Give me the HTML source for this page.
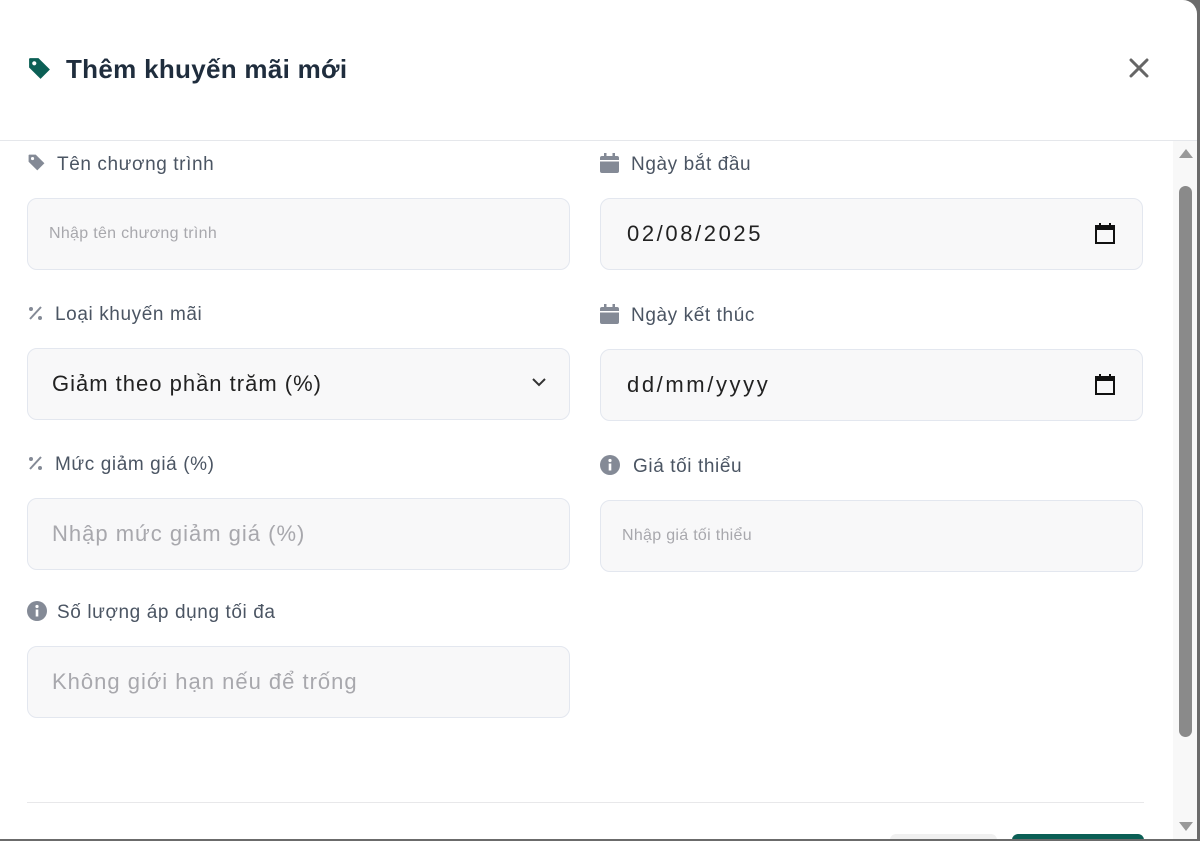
<!DOCTYPE html>
<html><head><meta charset="utf-8"><style>
*{box-sizing:border-box;margin:0;padding:0}
body{width:1200px;height:841px;background:#6b6b6b;font-family:"Liberation Sans",sans-serif;overflow:hidden;position:relative}
.modal{position:absolute;left:0;top:0;width:1197px;height:839px;background:#fff;border-top-right-radius:14px;overflow:hidden}
.hdr{position:absolute;left:0;top:0;width:1197px;height:141px;border-bottom:1px solid #e5e7eb}
.title{position:absolute;left:66px;top:54px;font-size:26px;font-weight:bold;color:#1f2d3d;letter-spacing:0.3px}
.lbl{position:absolute;font-size:19px;color:#4b5563;letter-spacing:0.6px;margin-top:2px}
.inp{position:absolute;width:543px;height:72px;background:#f8f8f9;border:1px solid #e3e7ef;border-radius:10px;font-size:22px;color:#222;padding-left:24px;display:flex;align-items:center;letter-spacing:1px}
.ph{color:#a8a8ad}
.sm{font-size:16px;letter-spacing:0.3px}
.dt{letter-spacing:2.6px}
svg{position:absolute}
</style></head><body>
<div class="modal">
<div class="hdr">
<svg style="left:27px;top:56px" width="25" height="25" viewBox="0 0 24 24"><path d="M2 3a1 1 0 0 1 1-1h8l11 11-9 9L2 11z" fill="#0b5f55"/><circle cx="7" cy="7" r="2" fill="#fff"/></svg>
<div class="title">Thêm khuyến mãi mới</div>
<svg style="left:1128px;top:57px" width="22" height="22" viewBox="0 0 22 22"><path d="M3 3l16 16M19 3L3 19" stroke="#666" stroke-width="3" stroke-linecap="round"/></svg>
</div>
<svg style="left:27px;top:153px" width="19" height="19" viewBox="0 0 24 24"><path d="M2 3a1 1 0 0 1 1-1h8l11 11-9 9L2 11z" fill="#848a96"/><circle cx="7" cy="7" r="2" fill="#fff"/></svg>
<div class="lbl" style="left:57px;top:152px">Tên chương trình</div>
<div class="inp" style="left:27px;top:198px;padding-left:21px"><span class="ph sm">Nhập tên chương trình</span></div>
<svg style="left:27px;top:305px" width="17" height="17" viewBox="0 0 17 17"><path d="M14 2L3 14" stroke="#848a96" stroke-width="2"/><circle cx="4" cy="4" r="2" fill="#848a96"/><circle cx="13" cy="13" r="2" fill="#848a96"/></svg>
<div class="lbl" style="left:55px;top:302px">Loại khuyến mãi</div>
<div class="inp" style="left:27px;top:348px">Giảm theo phần trăm (%)<svg style="left:504px;top:28px" width="14" height="10" viewBox="0 0 14 10"><path d="M1 2l6 6 6-6" stroke="#333" stroke-width="2" fill="none"/></svg></div>
<svg style="left:27px;top:455px" width="17" height="17" viewBox="0 0 17 17"><path d="M14 2L3 14" stroke="#848a96" stroke-width="2"/><circle cx="4" cy="4" r="2" fill="#848a96"/><circle cx="13" cy="13" r="2" fill="#848a96"/></svg>
<div class="lbl" style="left:55px;top:452px">Mức giảm giá (%)</div>
<div class="inp" style="left:27px;top:498px"><span class="ph">Nhập mức giảm giá (%)</span></div>
<svg style="left:27px;top:601px" width="20" height="20" viewBox="0 0 20 20"><circle cx="10" cy="10" r="10" fill="#848a96"/><rect x="8.7" y="8.5" width="2.6" height="7" fill="#fff"/><circle cx="10" cy="5.5" r="1.6" fill="#fff"/></svg>
<div class="lbl" style="left:57px;top:600px">Số lượng áp dụng tối đa</div>
<div class="inp" style="left:27px;top:646px"><span class="ph">Không giới hạn nếu để trống</span></div>

<svg style="left:600px;top:153px" width="19" height="20" viewBox="0 0 19 20"><rect x="0" y="3" width="19" height="17" rx="2" fill="#848a96"/><rect x="4" y="0" width="2.5" height="5" fill="#848a96"/><rect x="12.5" y="0" width="2.5" height="5" fill="#848a96"/><rect x="0" y="7" width="19" height="1.5" fill="#fff"/></svg>
<div class="lbl" style="left:631px;top:152px">Ngày bắt đầu</div>
<div class="inp dt" style="left:600px;top:198px;padding-left:26px">02/08/2025<svg style="left:494px;top:24px" width="20" height="21" viewBox="0 0 20 21"><rect x="1" y="3" width="18" height="17" fill="none" stroke="#111" stroke-width="2"/><rect x="1" y="3" width="18" height="4" fill="#111"/><rect x="4" y="0" width="2" height="4" fill="#111"/><rect x="14" y="0" width="2" height="4" fill="#111"/></svg></div>
<svg style="left:600px;top:304px" width="19" height="20" viewBox="0 0 19 20"><rect x="0" y="3" width="19" height="17" rx="2" fill="#848a96"/><rect x="4" y="0" width="2.5" height="5" fill="#848a96"/><rect x="12.5" y="0" width="2.5" height="5" fill="#848a96"/><rect x="0" y="7" width="19" height="1.5" fill="#fff"/></svg>
<div class="lbl" style="left:631px;top:303px">Ngày kết thúc</div>
<div class="inp dt" style="left:600px;top:349px;padding-left:26px">dd/mm/yyyy<svg style="left:494px;top:24px" width="20" height="21" viewBox="0 0 20 21"><rect x="1" y="3" width="18" height="17" fill="none" stroke="#111" stroke-width="2"/><rect x="1" y="3" width="18" height="4" fill="#111"/><rect x="4" y="0" width="2" height="4" fill="#111"/><rect x="14" y="0" width="2" height="4" fill="#111"/></svg></div>
<svg style="left:600px;top:455px" width="20" height="20" viewBox="0 0 20 20"><circle cx="10" cy="10" r="10" fill="#848a96"/><rect x="8.7" y="8.5" width="2.6" height="7" fill="#fff"/><circle cx="10" cy="5.5" r="1.6" fill="#fff"/></svg>
<div class="lbl" style="left:633px;top:454px">Giá tối thiểu</div>
<div class="inp" style="left:600px;top:500px;padding-left:21px"><span class="ph sm">Nhập giá tối thiểu</span></div>

<div style="position:absolute;left:27px;top:802px;width:1117px;height:1px;background:#e8e8ea"></div>
<div style="position:absolute;left:890px;top:834px;width:107px;height:12px;background:#f0f0f0;border-radius:8px"></div>
<div style="position:absolute;left:1012px;top:834px;width:132px;height:12px;background:#0b5f55;border-radius:8px"></div>

<div style="position:absolute;left:1173px;top:141px;width:24px;height:700px;background:#f8f8f8"></div>
<svg style="left:1178px;top:147px" width="16" height="12" viewBox="0 0 16 12"><path d="M1 11L8 2l7 9z" fill="#999"/></svg>
<div style="position:absolute;left:1179px;top:186px;width:13px;height:551px;background:#8a8a8a;border-radius:7px"></div>
<svg style="left:1178px;top:821px" width="16" height="12" viewBox="0 0 16 12"><path d="M1 1l7 9 7-9z" fill="#999"/></svg>
</div>
</body></html>
